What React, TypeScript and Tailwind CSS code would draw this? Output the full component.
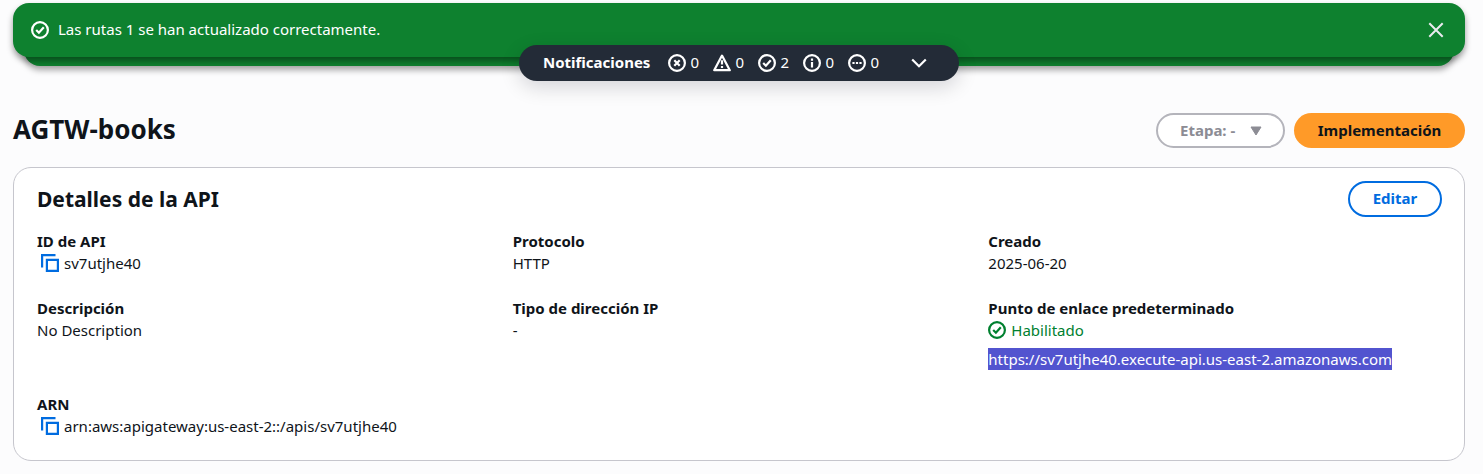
import type { ReactNode } from "react";

type IconProps = { className?: string };

function StatusCircle({ className = "", children }: IconProps & { children: ReactNode }) {
  return (
    <svg
      viewBox="0 0 18 18"
      className={`size-[18px] shrink-0 ${className}`}
      fill="none"
      stroke="currentColor"
      strokeWidth="2.2"
      aria-hidden="true"
    >
      <circle cx="9" cy="9" r="7.9" />
      {children}
    </svg>
  );
}

function SuccessIcon({ className }: IconProps) {
  return (
    <StatusCircle className={className}>
      <path d="M5.2 9l2.7 2.7 4.9-5.4" />
    </StatusCircle>
  );
}

function ErrorIcon() {
  return (
    <StatusCircle>
      <path d="M6.3 6.3l5.4 5.4M11.7 6.3l-5.4 5.4" />
    </StatusCircle>
  );
}

function InfoIcon() {
  return (
    <StatusCircle>
      <path d="M9 8v5.5M9 4.5v2.2" />
    </StatusCircle>
  );
}

function ProgressIcon() {
  return (
    <StatusCircle>
      <path d="M4.4 9h2.2M7.9 9h2.2M11.4 9h2.2" />
    </StatusCircle>
  );
}

function WarningIcon() {
  return (
    <svg
      viewBox="0 0 18 18"
      className="size-[18px] shrink-0"
      fill="none"
      stroke="currentColor"
      strokeWidth="2.2"
      strokeLinejoin="round"
      aria-hidden="true"
    >
      <path d="M9 1.6l7.8 14.6H1.2z" />
      <path d="M9 6.2v4.4M9 12v2" />
    </svg>
  );
}

function CopyButton({ label }: { label: string }) {
  return (
    <button type="button" aria-label={label} className="text-[#006ce0]">
      <svg viewBox="0 0 18 18" className="size-[18px]" fill="none" stroke="currentColor" strokeWidth="2.2" aria-hidden="true">
        <path d="M1.1 13.5V1.1h13.4" />
        <path d="M5.9 5.9h11v11h-11z" />
      </svg>
    </button>
  );
}

function Counter({ icon, count, label }: { icon: ReactNode; count: number; label: string }) {
  return (
    <span className="flex min-w-[31px] items-center gap-1" title={label}>
      {icon}
      <span className="pb-0.5">{count}</span>
    </span>
  );
}

function Field({ label, children }: { label: string; children: ReactNode }) {
  return (
    <div className="min-w-0">
      <dt className="font-bold">{label}</dt>
      <dd>{children}</dd>
    </div>
  );
}

function Notifications() {
  return (
    <section aria-label="Notificaciones" className="flex flex-col items-center">
      <div className="relative w-full">
        <div className="absolute inset-x-[11px] top-6 -bottom-[9px] rounded-2xl bg-[#0e812f] shadow-[0_4px_6px_rgba(0,0,0,0.35)]" />
        <div
          role="status"
          className="relative flex min-h-[54px] items-center gap-[9px] rounded-2xl bg-[#0e812f] pr-5 pl-[18px] text-white shadow-[0_4px_6px_rgba(0,0,0,0.4)]"
        >
          <SuccessIcon />
          <p className="flex-1 pb-0.5">Las rutas 1 se han actualizado correctamente.</p>
          <button type="button" aria-label="Cerrar" className="text-[#ebebf0]">
            <svg viewBox="0 0 18 18" className="size-[18px]" fill="none" stroke="currentColor" strokeWidth="2" aria-hidden="true">
              <path d="M2.3 2.3l13.4 13.4M15.7 2.3L2.3 15.7" />
            </svg>
          </button>
        </div>
      </div>
      <button
        type="button"
        aria-expanded="false"
        className="relative -mt-3 flex h-9 w-[440px] max-w-full items-center rounded-full bg-[#232b37] px-6 text-white shadow-[0_6px_20px_rgba(0,7,22,0.16)]"
      >
        <span className="pb-0.5 font-bold">Notificaciones</span>
        <span className="ml-[18px] flex items-center gap-[14px]">
          <Counter icon={<ErrorIcon />} count={0} label="Errores" />
          <Counter icon={<WarningIcon />} count={0} label="Advertencias" />
          <Counter icon={<SuccessIcon />} count={2} label="Correctas" />
          <Counter icon={<InfoIcon />} count={0} label="Información" />
          <Counter icon={<ProgressIcon />} count={0} label="En curso" />
        </span>
        <svg viewBox="0 0 18 18" className="mr-[7px] ml-auto size-[18px]" fill="none" stroke="currentColor" strokeWidth="2.2" aria-hidden="true">
          <path d="M2.2 5.5L9 12.3l6.8-6.8" />
        </svg>
      </button>
    </section>
  );
}

export default function App() {
  return (
    <main className="min-h-screen bg-[#fcfcfd] pt-[3px] pr-[18px] pb-[13px] pl-[13px] font-['Noto_Sans',sans-serif] text-[15px] leading-[22px] text-[#0f141a]">
      <Notifications />

      <header className="mt-8 flex items-center justify-between gap-4">
        <h1 className="pb-0.5 text-[26px] leading-[33px] font-bold">AGTW-books</h1>
        <div className="flex items-center gap-[9px]">
          <div className="relative">
            <select
              aria-label="Etapa"
              disabled
              className="block h-[35px] w-[129px] appearance-none rounded-full border-2 border-[#b4b4bb] bg-white pr-2 pb-0.5 pl-[22px] font-bold text-[#8c8c94] opacity-100"
            >
              <option>Etapa: -</option>
            </select>
            <svg viewBox="0 0 12 10" className="pointer-events-none absolute top-[13px] right-[23px] h-[10px] w-3 text-[#8c8c94]" fill="currentColor" stroke="currentColor" strokeLinejoin="round" aria-hidden="true">
              <path d="M1 1h10L6 9z" />
            </svg>
          </div>
          <button type="button" className="h-[35px] min-w-[171px] rounded-full bg-[#ff9a28] px-5 pb-0.5 font-bold text-[#0f141a]">
            Implementación
          </button>
        </div>
      </header>

      <section className="mt-[19px] rounded-[18px] border border-[#c6c6cd] bg-white pt-[13px] pr-[22px] pb-[23px] pl-[23px]">
        <div className="flex items-center justify-between gap-4">
          <h2 className="text-[21px] leading-7 font-bold">Detalles de la API</h2>
          <button type="button" className="h-9 min-w-[94px] rounded-full border-2 border-[#006ce0] bg-white px-5 pb-0.5 font-bold text-[#006ce0]">
            Editar
          </button>
        </div>

        <dl className="mt-[13px] grid grid-cols-3 gap-x-[22px] gap-y-[23px]">
          <Field label="ID de API">
            <span className="flex items-center gap-[5px] pl-1">
              <CopyButton label="Copiar ID de API" />
              sv7utjhe40
            </span>
          </Field>
          <Field label="Protocolo">HTTP</Field>
          <Field label="Creado">2025-06-20</Field>
          <Field label="Descripción">No Description</Field>
          <Field label="Tipo de dirección IP">-</Field>
          <Field label="Punto de enlace predeterminado">
            <span className="flex items-center gap-[5px] text-[#00802f]">
              <SuccessIcon />
              Habilitado
            </span>
            <a href="https://sv7utjhe40.execute-api.us-east-2.amazonaws.com" className="mt-[7px] inline-block bg-[#5254cf] text-white">
              https://sv7utjhe40.execute-api.us-east-2.amazonaws.com
            </a>
          </Field>
          <Field label="ARN">
            <span className="flex items-center gap-[5px] pl-1">
              <CopyButton label="Copiar ARN" />
              arn:aws:apigateway:us-east-2::/apis/sv7utjhe40
            </span>
          </Field>
        </dl>
      </section>
    </main>
  );
}
